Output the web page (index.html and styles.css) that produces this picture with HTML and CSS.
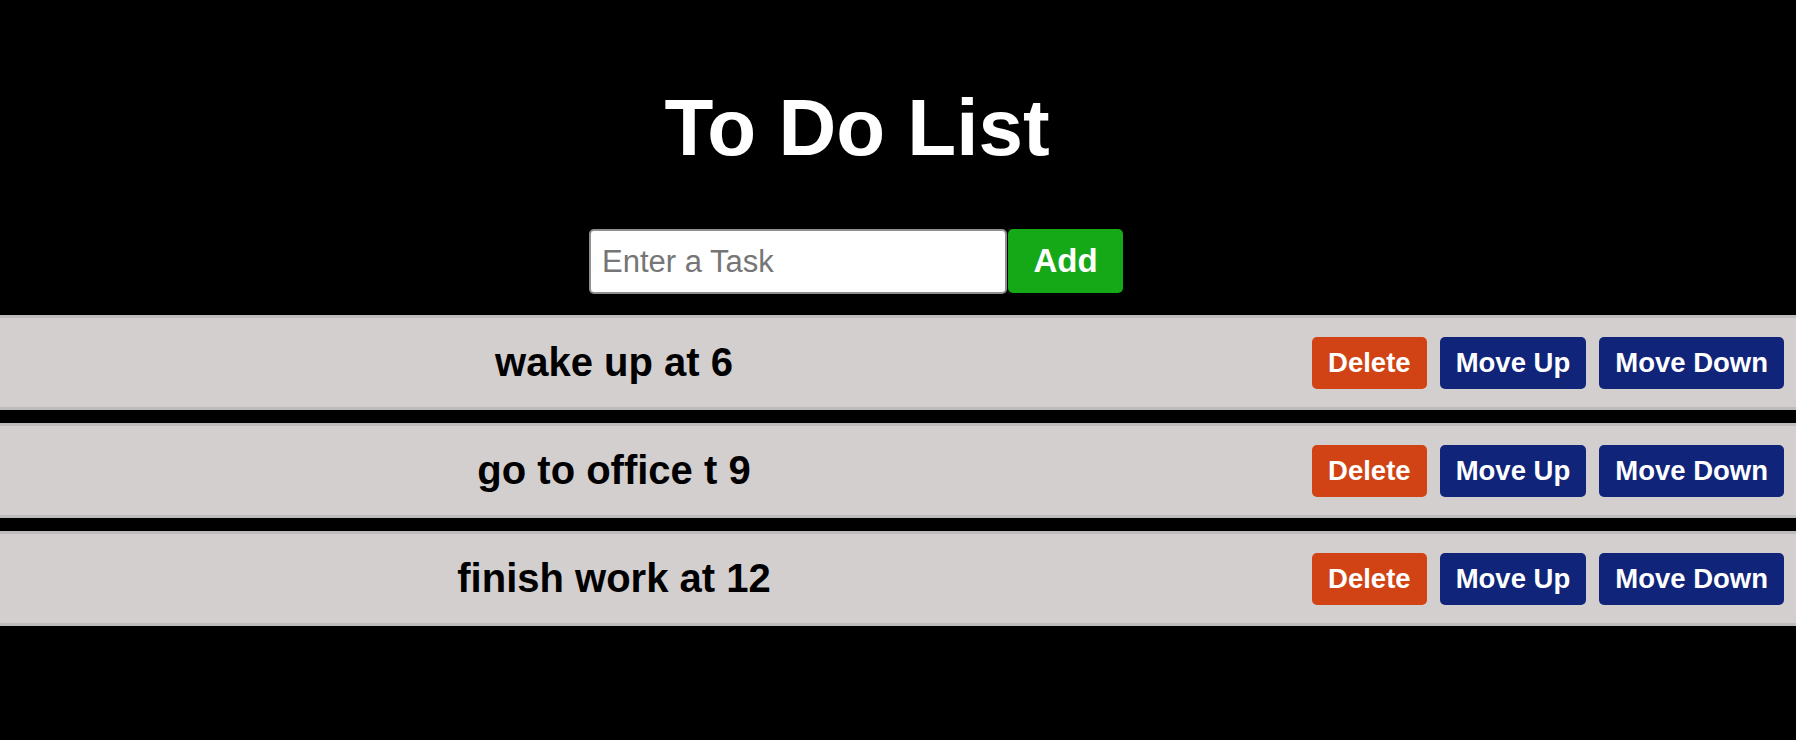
FILE: index.html
```html
<!DOCTYPE html>
<html lang="en">
<head>
<meta charset="utf-8">
<title>To Do List</title>
<link rel="stylesheet" href="styles.css">
</head>
<body>
  <header class="header">
    <h1 class="title">To Do List</h1>
    <div class="form">
      <input class="task-input" type="text" placeholder="Enter a Task">
      <button class="add-btn">Add</button>
    </div>
  </header>
  <ol class="list">
    <li class="item">
      <span class="task">wake up at 6</span>
      <div class="actions">
        <button class="btn btn-delete">Delete</button>
        <button class="btn btn-move">Move Up</button>
        <button class="btn btn-move">Move Down</button>
      </div>
    </li>
    <li class="item">
      <span class="task">go to office t 9</span>
      <div class="actions">
        <button class="btn btn-delete">Delete</button>
        <button class="btn btn-move">Move Up</button>
        <button class="btn btn-move">Move Down</button>
      </div>
    </li>
    <li class="item">
      <span class="task">finish work at 12</span>
      <div class="actions">
        <button class="btn btn-delete">Delete</button>
        <button class="btn btn-move">Move Up</button>
        <button class="btn btn-move">Move Down</button>
      </div>
    </li>
  </ol>
</body>
</html>
```

FILE: styles.css
```css
html, body {
  margin: 0;
  padding: 0;
  background: #000;
  font-family: "Liberation Sans", Arial, sans-serif;
}

.header {
  padding-top: 82px;
}

.title {
  width: 1714px;
  margin: 0;
  text-align: center;
  color: #fff;
  font-size: 80px;
  font-weight: bold;
  line-height: 92px;
}

.form {
  display: flex;
  align-items: flex-start;
  margin: 55px 0 0 589px;
}

.task-input {
  box-sizing: border-box;
  width: 418px;
  height: 65px;
  margin: 0 1px 0 0;
  padding: 0 11px;
  border: 2px solid #8f8f8f;
  border-radius: 5px;
  background: #fff;
  font-family: "Liberation Sans", Arial, sans-serif;
  font-size: 31px;
  color: #222;
  outline: none;
}

.task-input::placeholder {
  color: #767676;
}

.add-btn {
  width: 115px;
  height: 64px;
  padding: 0;
  border: none;
  border-radius: 5px;
  background: #15a918;
  color: #fff;
  font-family: "Liberation Sans", Arial, sans-serif;
  font-size: 33px;
  font-weight: bold;
}

.list {
  list-style: none;
  margin: 21px 0 0 0;
  padding: 0;
}

.item {
  display: flex;
  align-items: center;
  height: 89px;
  margin-bottom: 13px;
  background: #d3cfcf;
  border-top: 3px solid #bdbbbb;
  border-bottom: 3px solid #bdbbbb;
}

.task {
  flex: 0 0 1228px;
  text-align: center;
  font-size: 40px;
  font-weight: bold;
  color: #000;
}

.actions {
  display: flex;
  gap: 13px;
  margin: 0 12px 0 auto;
}

.btn {
  height: 52px;
  padding: 0 16px;
  border: none;
  border-radius: 5px;
  color: #fff;
  font-family: "Liberation Sans", Arial, sans-serif;
  font-size: 27.5px;
  font-weight: bold;
}

.btn-delete {
  background: #d14314;
}

.btn-move {
  background: #10247a;
}
```
